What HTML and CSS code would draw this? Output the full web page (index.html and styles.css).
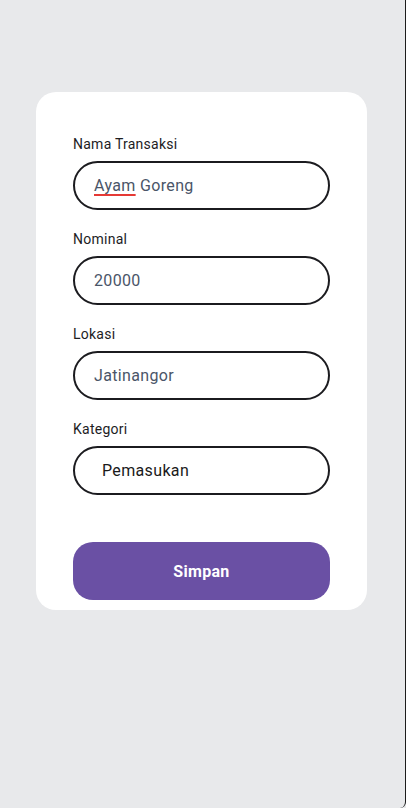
FILE: index.html
```html
<!DOCTYPE html>
<html>
<head>
<meta charset="utf-8">
<link rel="stylesheet" href="styles.css">
</head>
<body>
<div class="screen">
  <form class="card">
    <div class="field">
      <label class="label">Nama Transaksi</label>
      <div class="input"><span class="spell">Ayam</span>&nbsp;Goreng</div>
    </div>
    <div class="field">
      <label class="label">Nominal</label>
      <div class="input">20000</div>
    </div>
    <div class="field">
      <label class="label">Lokasi</label>
      <div class="input">Jatinangor</div>
    </div>
    <div class="field">
      <label class="label">Kategori</label>
      <div class="input select">Pemasukan</div>
    </div>
    <button type="button" class="btn">Simpan</button>
  </form>
</div>
</body>
</html>
```
FILE: styles.css
```css
html, body {
  margin: 0;
  padding: 0;
  height: 100%;
}
body {
  background: #e8e9eb;
  font-family: Roboto, "Noto Sans", sans-serif;
}
.screen {
  height: 808px;
  box-sizing: border-box;
  padding: 92px 38px 0 36px;
  border-right: 1px solid #1c1c1c;
  border-bottom-right-radius: 6px;
}
.card {
  background: #ffffff;
  border-radius: 20px;
  padding: 43px 37px 10px 37px;
  display: flex;
  flex-direction: column;
}
.field {
  display: flex;
  flex-direction: column;
  gap: 6px;
  margin-bottom: 20px;
}
.field:last-of-type {
  margin-bottom: 47px;
}
.label {
  font-size: 14px;
  line-height: 19px;
  padding-bottom: 1px;
  letter-spacing: 0.25px;
  color: #1d1d1f;
}
.input {
  height: 49px;
  box-sizing: border-box;
  border: 2px solid #1b1b1f;
  border-radius: 25px;
  padding: 0 19px;
  display: flex;
  align-items: center;
  font-size: 16px;
  letter-spacing: 0.35px;
  color: #4a5568;
}
.spell {
  text-decoration: underline;
  text-decoration-color: #e53935;
  text-decoration-thickness: 2px;
  text-underline-offset: 3px;
}
.select {
  padding-left: 27px;
  color: #1a1a1a;
}
.btn {
  height: 58px;
  border: none;
  border-radius: 20px;
  background: #6a50a4;
  color: #ffffff;
  font-family: Roboto, "Noto Sans", sans-serif;
  font-weight: 700;
  font-size: 16px;
  letter-spacing: 0.3px;
}
```
